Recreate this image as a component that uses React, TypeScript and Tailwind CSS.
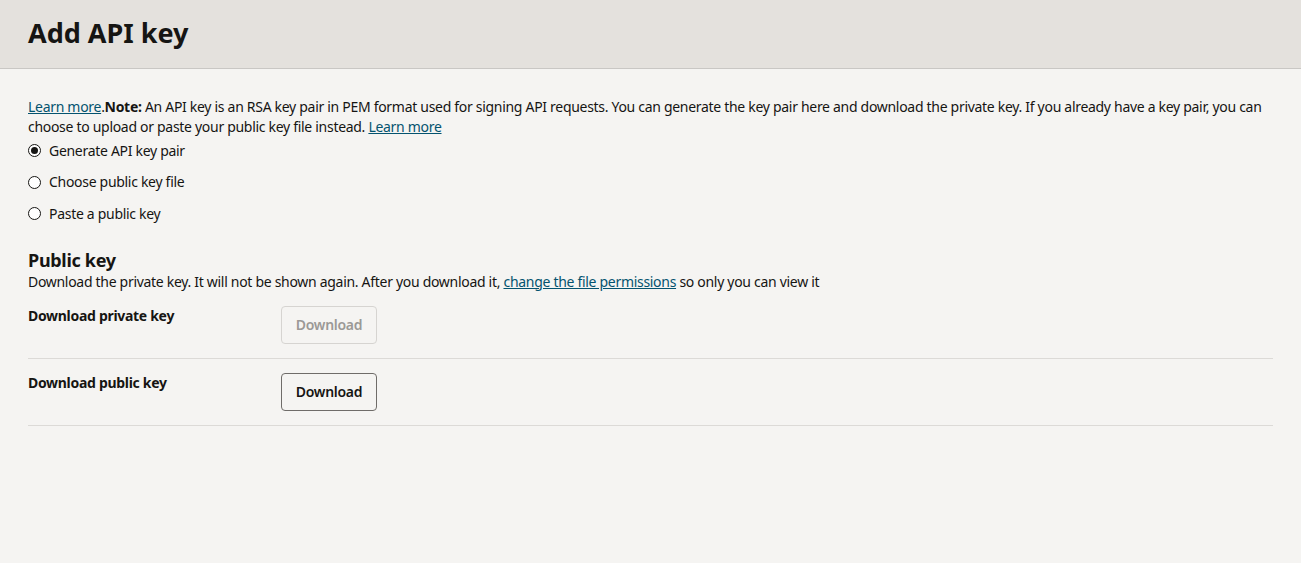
import React, { useState } from 'react';

const options = ['Generate API key pair', 'Choose public key file', 'Paste a public key'];

const App: React.FC = () => {
  const [selected, setSelected] = useState<number>(0);

  return (
    <div className="min-h-screen bg-[#f5f4f2] text-[#161513] tracking-[-0.3px]" style={{ fontFamily: '"Noto Sans", "Open Sans", sans-serif' }}>
      <div className="h-[69px] bg-[#e4e1dd] border-b border-[#c9c7c4] px-7 flex items-center">
        <h1 className="text-[27px] font-bold leading-none pb-1 tracking-normal">Add API key</h1>
      </div>

      <div className="px-7 pt-[28px]">
        <p className="text-sm leading-5">
          <a href="#" className="text-[#04536f] underline">Learn more</a>
          .<span className="font-bold">Note:</span> An API key is an RSA key pair in PEM format used for signing API requests. You can generate the key pair here and download the private key. If you already have a key pair, you can choose to upload or paste your public key file instead.{' '}
          <a href="#" className="text-[#04536f] underline">Learn more</a>
        </p>

        <div className="-mt-0.5 flex flex-col">
          {options.map((label, index) => (
            <label key={index} className="flex items-center gap-2 h-[31.5px] text-sm cursor-pointer">
              <span className="w-[13px] h-[13px] rounded-full border border-[#161513] flex items-center justify-center bg-white">
                {selected === index && <span className="w-[7px] h-[7px] rounded-full bg-[#161513]" />}
              </span>
              <input type="radio" className="hidden" checked={selected === index} onChange={() => setSelected(index)} />
              {label}
            </label>
          ))}
        </div>

        <h2 className="mt-[18px] text-lg font-bold leading-6">Public key</h2>
        <p className="text-sm leading-5">
          Download the private key. It will not be shown again. After you download it,{' '}
          <a href="#" className="text-[#04536f] underline">change the file permissions</a> so only you can view it
        </p>

        <div>
          <div className="flex items-start pt-[14px] pb-[14px] border-b border-[#dcdad7]">
            <div className="w-[253px] text-sm font-bold leading-5">Download private key</div>
            <button disabled className="h-[38px] w-[96px] rounded border border-[#d6d4d1] text-sm text-[#9b9996] font-semibold">
              Download
            </button>
          </div>
          <div className="flex items-start pt-[14px] pb-[14px] border-b border-[#dcdad7]">
            <div className="w-[253px] text-sm font-bold leading-5">Download public key</div>
            <button className="h-[38px] w-[96px] rounded border border-[#6f6c69] text-sm font-semibold bg-[#f5f4f2]">
              Download
            </button>
          </div>
        </div>
      </div>
    </div>
  );
};

export default App;
